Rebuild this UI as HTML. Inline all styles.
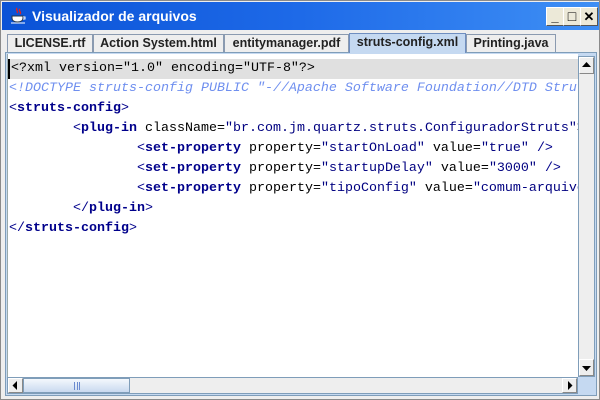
<!DOCTYPE html>
<html><head><style>
*{margin:0;padding:0;box-sizing:border-box}
body{width:600px;height:400px;overflow:hidden;background:#d4d0c8;font-family:"Liberation Sans",sans-serif;position:relative}
.win{position:absolute;left:0;top:0;width:600px;height:400px;border:1px solid #8a8a8a;background:#eeeeee}
.title{position:absolute;left:1px;top:1px;width:597px;height:28px;background:linear-gradient(90deg,#0a52d6 0%,#1e6ae8 50%,#3e8ff5 100%);color:#fff;font-weight:bold;font-size:14px}
.title span{position:absolute;left:30px;top:6px}
.btn{position:absolute;top:5px;width:18px;height:19px;background:#ece9d8;border:1px solid #fff;border-right-color:#555;border-bottom-color:#555;font-size:13px;font-weight:bold;color:#000;text-align:center;line-height:17px}
.tab{position:absolute;top:33px;height:18px;border:1px solid #8a9ab0;border-bottom:none;background:#eeeeee;font-weight:bold;font-size:12.5px;color:#222;text-align:center;line-height:17px}
.sel{background:#c5d9f1;top:32px;height:20px;border-color:#6f8ec0}
.panel{position:absolute;left:4px;top:51px;width:592px;height:344px;background:#c5d9f1;border:1px solid #7f9db9}
.text{position:absolute;left:6px;top:53px;width:571px;height:323px;background:#fff;overflow:hidden;font-family:"Liberation Mono",monospace;font-size:13.33px;border-left:1px solid #9aa;padding-top:5px}
.line{height:20px;line-height:20px;padding-left:1px;white-space:pre}
.hl{background:#e0e0e0;border-left:2px solid #000}
.c{color:#6f8fef;font-style:italic}
.t{color:#00008b;font-weight:bold}
.b{color:#00008b}
.a{color:#000080}
.vs{position:absolute;left:577px;top:55px;width:17px;height:321px;background:#eeeeee;border:1px solid #7f9db9}
.hs{position:absolute;left:6px;top:376px;width:571px;height:17px;background:#eeeeee;border:1px solid #7f9db9}
.ar{position:absolute;width:15px;height:15px;background:#eee;border:1px solid #fff;border-right-color:#888;border-bottom-color:#888}
</style></head><body>
<div class="win">
<div class="title">
<svg style="position:absolute;left:8px;top:5px" width="16" height="18" viewBox="0 0 16 18"><path d="M7 1c-2 2 2 3 0 5M10 2c-2 2 2 3 0 5" stroke="#d22" fill="none" stroke-width="1.3"/><path d="M2 9h11v2c0 3-3 4-5.5 4S2 14 2 11z" fill="#fff" stroke="#234" stroke-width="1"/><path d="M13 10h2v2h-2" stroke="#fff" fill="none"/><path d="M1 16h14" stroke="#fff"/></svg>
<span>Visualizador de arquivos</span>
<div class="btn" style="left:544px">_</div>
<div class="btn" style="left:561px;font-size:14px">□</div>
<div class="btn" style="left:578px">✕</div>
</div>
<div class="tab" style="left:6px;width:86px">LICENSE.rtf</div>
<div class="tab" style="left:92px;width:131px">Action System.html</div>
<div class="tab" style="left:223px;width:125px">entitymanager.pdf</div>
<div class="tab" style="left:465px;width:90px">Printing.java</div>
<div class="panel"></div>
<div class="tab sel" style="left:348px;width:117px">struts-config.xml</div>
<div class="text"><div class="line hl">&lt;?xml version="1.0" encoding="UTF-8"?&gt;</div><div class="line c">&lt;!DOCTYPE struts-config PUBLIC "-//Apache Software Foundation//DTD Struts Configuration 1.2//EN"</div><div class="line"><span class="b">&lt;</span><span class="t">struts-config</span><span class="b">&gt;</span></div><div class="line">        <span class="b">&lt;</span><span class="t">plug-in</span> className=<span class="a">"br.com.jm.quartz.struts.ConfiguradorStruts"</span>&gt;</div><div class="line">                <span class="b">&lt;</span><span class="t">set-property</span> property=<span class="a">"startOnLoad"</span> value=<span class="a">"true"</span> <span class="b">/&gt;</span></div><div class="line">                <span class="b">&lt;</span><span class="t">set-property</span> property=<span class="a">"startupDelay"</span> value=<span class="a">"3000"</span> <span class="b">/&gt;</span></div><div class="line">                <span class="b">&lt;</span><span class="t">set-property</span> property=<span class="a">"tipoConfig"</span> value=<span class="a">"comum-arquivo"</span> <span class="b">/&gt;</span></div><div class="line">        <span class="b">&lt;/</span><span class="t">plug-in</span><span class="b">&gt;</span></div><div class="line"><span class="b">&lt;/</span><span class="t">struts-config</span><span class="b">&gt;</span></div></div>
<div class="vs">
<div class="ar" style="left:0;top:0;width:15px;height:17px"><svg width="13" height="15"><path d="M2 9h9L6.5 4z" fill="#000"/></svg></div>
<div class="ar" style="left:0;bottom:0;width:15px;height:17px"><svg width="13" height="15"><path d="M2 6h9L6.5 11z" fill="#000"/></svg></div>
</div>
<div class="hs">
<div class="ar" style="left:0;top:0"><svg width="13" height="13"><path d="M8 2v9L3.5 6.5z" fill="#000"/></svg></div>
<div style="position:absolute;left:15px;top:0;width:107px;height:15px;background:linear-gradient(#f4f8fd,#c9d9ef);border:1px solid #7f9db9"><div style="position:absolute;left:50px;top:3px;width:6px;height:8px;border-left:1px solid #6a8ad0;border-right:1px solid #6a8ad0"><div style="margin-left:1.5px;width:1px;height:8px;background:#6a8ad0"></div></div></div>
<div class="ar" style="right:0;top:0"><svg width="13" height="13"><path d="M5 2v9L9.5 6.5z" fill="#000"/></svg></div>
</div>
</div>
</body></html>
